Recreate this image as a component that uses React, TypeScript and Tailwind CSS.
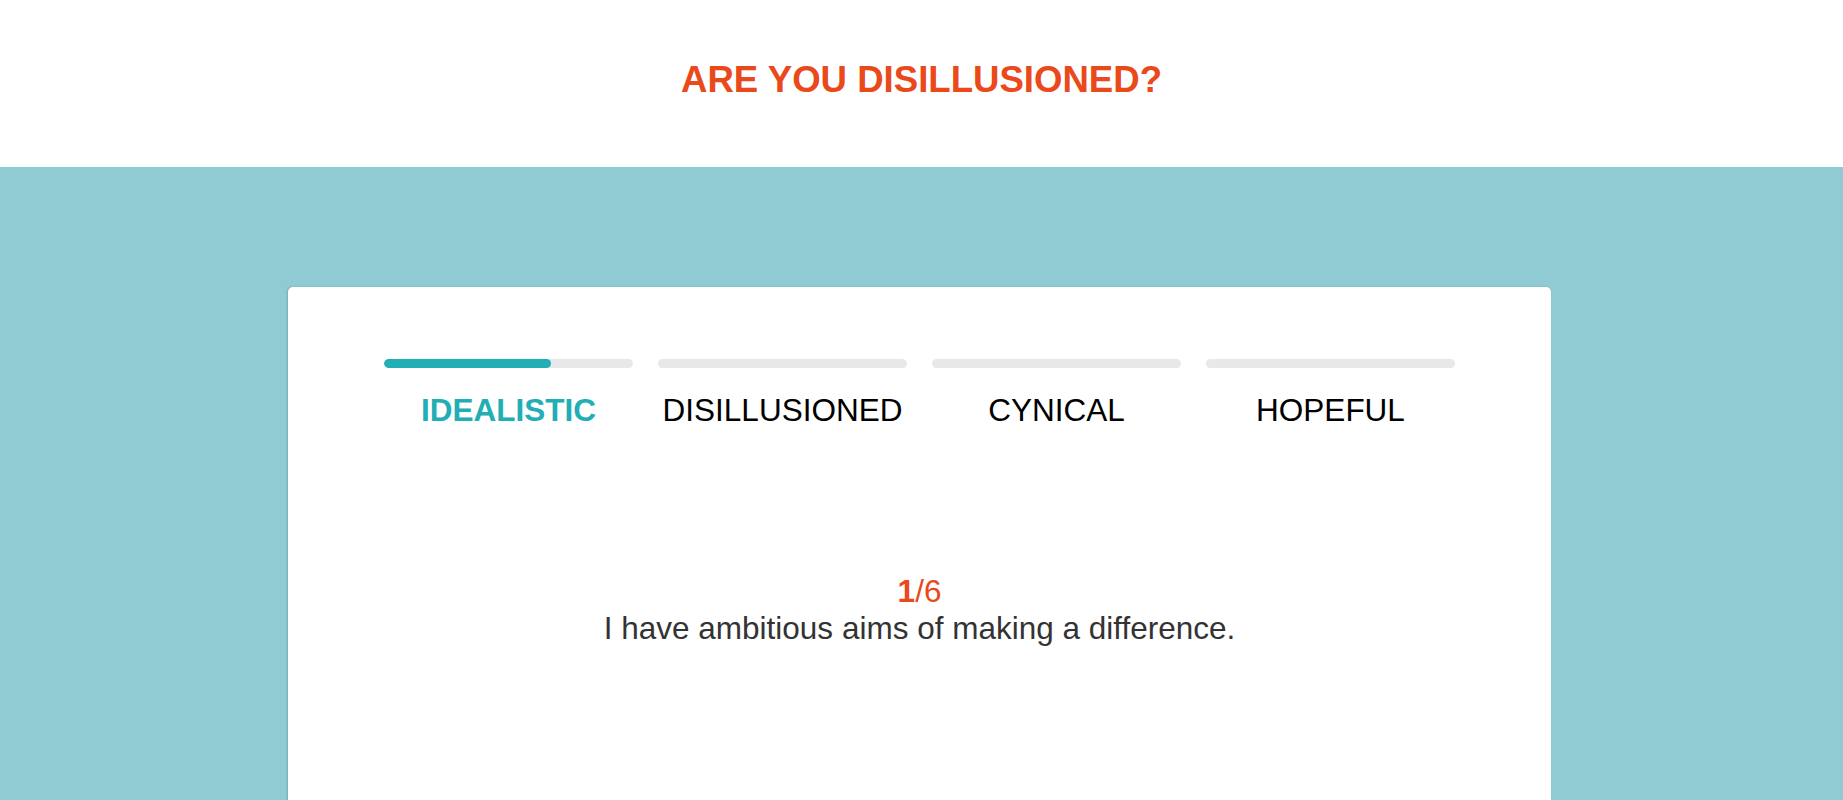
const stages = [
  { label: "IDEALISTIC", fill: 67, active: true },
  { label: "DISILLUSIONED", fill: 0, active: false },
  { label: "CYNICAL", fill: 0, active: false },
  { label: "HOPEFUL", fill: 0, active: false },
];

function Stage({ label, fill, active }: { label: string; fill: number; active: boolean }) {
  return (
    <div className="flex flex-col items-center">
      <div className="h-[9px] w-full rounded-full bg-[#e8e8e8] overflow-hidden">
        <div className="h-full rounded-full bg-[#21aeb5]" style={{ width: `${fill}%` }} />
      </div>
      <span
        className={
          active
            ? "mt-[27px] text-[31.5px] leading-none font-bold text-[#21aeb5]"
            : "mt-[27px] text-[31.5px] leading-none text-black"
        }
      >
        {label}
      </span>
    </div>
  );
}

export default function App() {
  return (
    <div className="min-h-screen bg-[#90cbd3] font-['Liberation_Sans',Arial,sans-serif]">
      <header className="h-[167px] bg-white pt-[62px] text-center">
        <h1 className="text-[36.6px] leading-none font-bold text-[#e9491b]">ARE YOU DISILLUSIONED?</h1>
      </header>

      <main className="flex justify-center pt-[120px] pr-[4px]">
        <div className="w-[1263px] min-h-[600px] rounded-[5px] bg-white px-[96px] pt-[72px] shadow-[-1px_0_2px_rgba(0,90,100,0.25)]">
          <div className="grid grid-cols-4 gap-[25px]">
            {stages.map((s) => (
              <Stage key={s.label} {...s} />
            ))}
          </div>

          <div className="mt-[149px] flex flex-col items-center text-center">
            <div className="text-[31.5px] leading-none text-[#e9491b]">
              <span className="font-bold">1</span>/6
            </div>
            <p className="mt-[6px] text-[31.5px] leading-none text-[#333333]">
              I have ambitious aims of making a difference.
            </p>
          </div>
        </div>
      </main>
    </div>
  );
}
